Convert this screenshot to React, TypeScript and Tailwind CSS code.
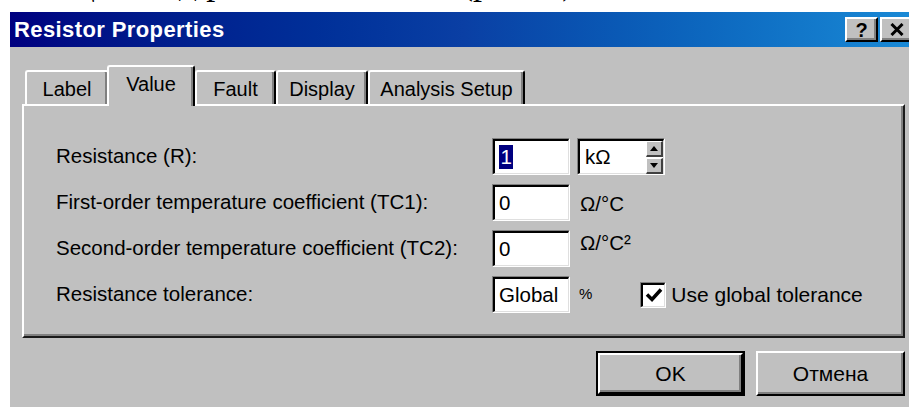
import React from "react";

// Win9x bevels
const raised =
  "border-t-2 border-l-2 border-t-white border-l-white border-b-2 border-r-2 border-b-black border-r-black shadow-[inset_-2px_-2px_0_#808080]";

function Sunken({ className = "", children }: { className?: string; children?: React.ReactNode }) {
  return (
    <div
      className={`border-t border-l border-t-[#808080] border-l-[#808080] border-b border-r border-b-white border-r-white ${className}`}
    >
      <div className="flex h-full items-center border-t-2 border-l-2 border-t-black border-l-black border-b border-r border-b-[#dfdfdf] border-r-[#dfdfdf] bg-white">
        {children}
      </div>
    </div>
  );
}

function Row({ label, children }: { label: string; children: React.ReactNode }) {
  return (
    <div className="flex h-[37px] items-center">
      <span className="w-[436px] shrink-0">{label}</span>
      {children}
    </div>
  );
}

function SpinButton({ up }: { up?: boolean }) {
  return (
    <div className="flex h-[16px] w-[17px] items-center justify-center border-t border-l border-t-white border-l-white border-b-2 border-r-2 border-b-[#404040] border-r-[#404040] bg-[#c0c0c0]">
      <svg width="8" height="5" viewBox="0 0 8 5">
        <path d={up ? "M0 5 L4 0 L8 5Z" : "M0 0 L4 5 L8 0Z"} fill="black" />
      </svg>
    </div>
  );
}

function Tab({ label, width, active }: { label: string; width: string; active?: boolean }) {
  if (active) {
    return (
      <div
        className={`${width} relative z-10 -mb-[2px] -ml-[2px] h-[41px] rounded-t-[3px] border-t-2 border-l-2 border-t-white border-l-white border-r-2 border-r-black bg-[#c0c0c0] pt-[6px] text-center shadow-[inset_-2px_0_0_#808080]`}
      >
        {label}
      </div>
    );
  }
  return (
    <div
      className={`${width} h-[34px] rounded-t-[3px] border-t-2 border-l-2 border-t-white border-l-white border-r-2 border-r-black bg-[#c0c0c0] pt-[6px] text-center shadow-[inset_-2px_0_0_#808080]`}
    >
      {label}
    </div>
  );
}

export default function App() {
  return (
    <div className="h-[407px] w-[909px] overflow-hidden bg-white font-['Liberation_Sans',Arial,sans-serif] text-black">
      {/* bottom edge of the page text above the dialog */}
      <div className="h-[12px] overflow-hidden">
        <div className="-mt-[38px] flex whitespace-nowrap font-['Liberation_Serif','Times_New_Roman',serif] text-[36px] leading-[40px]">
          <span className="ml-[23px]">Общий вид реле</span>
          <span className="ml-[187px]">(рис. 2)</span>
        </div>
      </div>

      <div className="ml-[10px] flex h-[400px] w-[907px] flex-col bg-[#c0c0c0]">
        {/* title bar */}
        <div className="flex h-[35px] shrink-0 items-center bg-linear-to-r from-[#000080] via-[#0a3fa4] to-[#1a8ad6] pl-[4px] pr-[4px]">
          <span className="flex-1 text-[22px] font-bold tracking-[0.4px] text-white">Resistor Properties</span>
          <div className="flex gap-[2px]">
            <div className={`flex h-[25px] w-[33px] items-center justify-center bg-[#c0c0c0] text-[20px] font-bold leading-none ${raised}`}>
              ?
            </div>
            <div className={`flex h-[25px] w-[33px] items-center justify-center bg-[#c0c0c0] ${raised}`}>
              <svg width="14" height="13" viewBox="0 0 14 13">
                <path d="M1.5 1 L12.5 12 M12.5 1 L1.5 12" stroke="black" strokeWidth="3" />
              </svg>
            </div>
          </div>
        </div>

        <div className="flex flex-col px-[12px] text-[20.5px]">
          {/* tabs */}
          <div className="mt-[18px] flex h-[39px] items-end pl-[3px] text-[20px] leading-[23px]">
            <Tab label="Label" width="w-[84px]" />
            <Tab label="Value" width="w-[88px]" active />
            <Tab label="Fault" width="w-[81px]" />
            <Tab label="Display" width="w-[92px]" />
            <Tab label="Analysis Setup" width="w-[157px]" />
          </div>

          {/* tab page */}
          <div className="flex h-[234px] flex-col gap-[9px] border-t-2 border-l-2 border-t-white border-l-white border-b-2 border-r-2 border-b-[#1a1a1a] border-r-[#1a1a1a] pl-[32px] pt-[32px] shadow-[inset_-2px_-2px_0_#808080]">
            <Row label="Resistance (R):">
              <Sunken className="h-[37px] w-[78px]">
                <span className="ml-[4px] bg-[#000080] px-[1.5px] leading-[24px] text-white">1</span>
              </Sunken>
              <Sunken className="ml-[7px] h-[37px] w-[88px]">
                <span className="flex-1 pl-[5px]">kΩ</span>
                <div className="flex flex-col gap-[1px] self-start">
                  <SpinButton up />
                  <SpinButton />
                </div>
              </Sunken>
            </Row>
            <Row label="First-order temperature coefficient (TC1):">
              <Sunken className="h-[37px] w-[78px]">
                <span className="pl-[4px]">0</span>
              </Sunken>
              <span className="ml-[10px] mt-[4px]">Ω/°C</span>
            </Row>
            <Row label="Second-order temperature coefficient (TC2):">
              <Sunken className="h-[37px] w-[78px]">
                <span className="pl-[4px]">0</span>
              </Sunken>
              <span className="ml-[10px] mb-[10px]">Ω/°C²</span>
            </Row>
            <Row label="Resistance tolerance:">
              <Sunken className="h-[37px] w-[78px]">
                <span className="pl-[4px]">Global</span>
              </Sunken>
              <span className="ml-[9px] text-[15px]">%</span>
              <Sunken className="ml-[48px] h-[26px] w-[26px]">
                <svg width="20" height="20" viewBox="0 0 20 20" className="mx-auto">
                  <path d="M3 9.5 L8 14.5 L17 4.5" fill="none" stroke="black" strokeWidth="3.5" />
                </svg>
              </Sunken>
              <span className="ml-[5px] text-[21px]">Use global tolerance</span>
            </Row>
          </div>

          {/* dialog buttons */}
          <div className="mt-[13px] flex justify-end gap-[11px] text-[21px]">
            <div className="h-[45px] w-[149px] border-2 border-black">
              <button className={`h-full w-full bg-[#c0c0c0] ${raised}`}>OK</button>
            </div>
            <button className={`h-[45px] w-[149px] bg-[#c0c0c0] ${raised}`}>Отмена</button>
          </div>
        </div>
      </div>
    </div>
  );
}
